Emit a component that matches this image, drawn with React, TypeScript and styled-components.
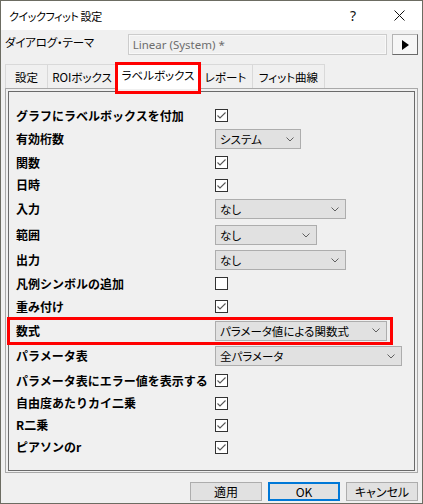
import React from "react";
import styled, { createGlobalStyle, css } from "styled-components";

const Global = createGlobalStyle`
  html, body { margin: 0; padding: 0; background: #ffffff; }
  body { font-family: "Noto Sans CJK JP", "Noto Sans", sans-serif; }
  *, *::before, *::after { box-sizing: border-box; }
`;

const UI = `"Noto Sans CJK JP", "Noto Sans", sans-serif`;

const Window = styled.div`
  width: 423px;
  height: 504px;
  border: 1px solid #6c6c62;
  background: #f0f0f0;
  display: flex;
  flex-direction: column;
  overflow: hidden;
`;

const TitleBar = styled.div`
  height: 29px;
  background: #ffffff;
  display: flex;
  align-items: center;
  padding-left: 8px;
  font-family: ${UI};
  font-feature-settings: "palt";
  font-size: 11px;
  letter-spacing: -0.4px;
  color: #000;
`;

const Title = styled.div`
  flex: 1;
`;

const TitleButton = styled.div<{ $w: number }>`
  width: ${(p) => p.$w}px;
  height: 29px;
  display: flex;
  align-items: center;
  justify-content: center;
  font-family: "Noto Sans", sans-serif;
  font-size: 14px;
  letter-spacing: 0;
  color: #111;
`;

const Body = styled.div`
  flex: 1;
  display: flex;
  flex-direction: column;
  padding: 0 4px;
`;

const ThemeRow = styled.div`
  display: flex;
  align-items: flex-start;
  margin-top: 4px;
  height: 21px;
`;

const ThemeLabel = styled.div`
  width: 123px;
  font-family: ${UI};
  font-feature-settings: "palt";
  font-size: 11.5px;
  letter-spacing: -0.2px;
  line-height: 15px;
  padding-top: 1px;
  color: #000;
`;

const ThemeInput = styled.div`
  width: 260px;
  height: 21px;
  border: 1px solid #cccccc;
  box-shadow: inset 0 0 0 1px #f8f8f8;
  background: #f0f0f0;
  font-family: "Noto Sans", sans-serif;
  font-size: 11.5px;
  color: #6d6d6d;
  display: flex;
  align-items: center;
  padding-left: 4px;
`;

const ArrowButton = styled.div`
  margin-left: 5px;
  width: 26px;
  height: 21px;
  background: #f6f6f6;
  border: 1px solid #b4b4b4;
  border-right-color: #6a6a6a;
  border-bottom-color: #6a6a6a;
  display: flex;
  align-items: center;
  justify-content: center;
`;

const TabStrip = styled.div`
  display: flex;
  align-items: flex-end;
  height: 26px;
  margin-top: 7px;
  position: relative;
  z-index: 2;
`;

const Tab = styled.div<{ $w: number; $active?: boolean }>`
  width: ${(p) => p.$w}px;
  flex: none;
  height: 24px;
  border: 1px solid #d9d9d9;
  border-bottom: none;
  background: #f0f0f0;
  margin-left: -1px;
  display: flex;
  align-items: center;
  justify-content: center;
  font-family: ${UI};
  font-feature-settings: "palt";
  font-size: 11.5px;
  white-space: nowrap;
  color: #000;
  &:first-child { margin-left: 0; }
  ${(p) =>
    p.$active &&
    css`
      position: relative;
      height: 27px;
      margin: 0 -2px -1px -2px;
      background: #ffffff;
      padding-bottom: 2px;
      z-index: 1;
      &::after {
        content: "";
        position: absolute;
        left: -1px;
        top: -1px;
        width: ${p.$w}px;
        height: 32px;
        border: 3px solid #ff0000;
      }
    `}
`;

const TabPanel = styled.div`
  height: 385px;
  border: 1px solid #a9a9a9;
  padding: 2px 2px 1px 2px;
  background: #f0f0f0;
`;

const Group = styled.div`
  height: 100%;
  border: 1px solid #6a6a6a;
  padding: 12px 0 0 7px;
  display: flex;
  flex-direction: column;
`;

const Row = styled.div<{ $h: number; $mark?: boolean }>`
  height: ${(p) => p.$h}px;
  flex: none;
  display: grid;
  grid-template-columns: 199px auto;
  align-items: center;
  position: relative;
  ${(p) =>
    p.$mark &&
    css`
      &::after {
        content: "";
        position: absolute;
        left: -9px;
        top: -1px;
        width: 386px;
        height: 28px;
        border: 3px solid #ff0000;
        pointer-events: none;
      }
    `}
`;

const Label = styled.div`
  font-family: ${UI};
  font-size: 12px;
  font-weight: 700;
  color: #000;
  white-space: nowrap;
  line-height: 14px;
`;

const CheckBox = styled.div`
  width: 13px;
  height: 13px;
  border: 1px solid #333333;
  background: #ffffff;
  display: flex;
  align-items: center;
  justify-content: center;
`;

const Select = styled.div<{ $w: number }>`
  width: ${(p) => p.$w}px;
  height: 20px;
  border: 1px solid #adadad;
  background: #e1e1e1;
  display: flex;
  align-items: center;
  justify-content: space-between;
  padding: 0 6px 0 4px;
  font-family: ${UI};
  font-feature-settings: "palt";
  font-size: 11.5px;
  white-space: nowrap;
  color: #000;
`;

const ButtonRow = styled.div`
  display: flex;
  justify-content: flex-end;
  gap: 6px;
  margin-top: 9px;
`;

const Button = styled.div<{ $default?: boolean }>`
  width: 72px;
  height: 19px;
  border: 1px solid #adadad;
  background: #e1e1e1;
  display: flex;
  align-items: center;
  justify-content: center;
  font-family: ${UI};
  font-feature-settings: "palt";
  font-size: 12px;
  color: #000;
  ${(p) =>
    p.$default &&
    css`
      border: 2px solid #0078d7;
    `}
`;

const Check = () => (
  <svg width="11" height="11" viewBox="0 0 11 11">
    <path d="M1.5 5.5 L4 8 L9.5 2.5" fill="none" stroke="#555" strokeWidth="1.1" />
  </svg>
);

const Chevron = () => (
  <svg width="8" height="5" viewBox="0 0 8 5">
    <path d="M0.5 0.5 L4 4 L7.5 0.5" fill="none" stroke="#606060" strokeWidth="1" />
  </svg>
);

type RowDef =
  | { label: string; kind: "check"; checked: boolean; h: number }
  | { label: string; kind: "select"; value: string; w: number; h: number; mark?: boolean };

const rows: RowDef[] = [
  { label: "グラフにラベルボックスを付加", kind: "check", checked: true, h: 23 },
  { label: "有効桁数", kind: "select", value: "システム", w: 86, h: 24 },
  { label: "関数", kind: "check", checked: true, h: 23 },
  { label: "日時", kind: "check", checked: true, h: 22 },
  { label: "入力", kind: "select", value: "なし", w: 131, h: 26 },
  { label: "範囲", kind: "select", value: "なし", w: 102, h: 26 },
  { label: "出力", kind: "select", value: "なし", w: 131, h: 24 },
  { label: "凡例シンボルの追加", kind: "check", checked: false, h: 23 },
  { label: "重み付け", kind: "check", checked: true, h: 23 },
  { label: "数式", kind: "select", value: "パラメータ値による関数式", w: 172, h: 25, mark: true },
  { label: "パラメータ表", kind: "select", value: "全パラメータ", w: 187, h: 26 },
  { label: "パラメータ表にエラー値を表示する", kind: "check", checked: true, h: 23 },
  { label: "自由度あたりカイ二乗", kind: "check", checked: true, h: 22 },
  { label: "R二乗", kind: "check", checked: true, h: 22 },
  { label: "ピアソンのr", kind: "check", checked: true, h: 22 },
];

const tabs = [
  { label: "設定", w: 43 },
  { label: "ROIボックス", w: 70 },
  { label: "ラベルボックス", w: 86, active: true },
  { label: "レポート", w: 55 },
  { label: "フィット曲線", w: 73 },
];

export default function App() {
  return (
    <>
      <Global />
      <Window>
        <TitleBar>
          <Title>クイックフィット 設定</Title>
          <TitleButton $w={46}>?</TitleButton>
          <TitleButton $w={46}>
            <svg width="11" height="11" viewBox="0 0 11 11">
              <path d="M0.5 0.5 L10.5 10.5 M10.5 0.5 L0.5 10.5" stroke="#111" strokeWidth="1" />
            </svg>
          </TitleButton>
        </TitleBar>
        <Body>
          <ThemeRow>
            <ThemeLabel>ダイアログ・テーマ</ThemeLabel>
            <ThemeInput>Linear (System) *</ThemeInput>
            <ArrowButton>
              <svg width="8" height="10" viewBox="0 0 8 10">
                <path d="M1 0 L8 5 L1 10 Z" fill="#000" />
              </svg>
            </ArrowButton>
          </ThemeRow>
          <TabStrip>
            {tabs.map((t) => (
              <Tab key={t.label} $w={t.w} $active={t.active}>
                {t.label}
              </Tab>
            ))}
          </TabStrip>
          <TabPanel>
            <Group>
              {rows.map((r) => (
                <Row key={r.label} $h={r.h} $mark={r.kind === "select" && r.mark}>
                  <Label>{r.label}</Label>
                  {r.kind === "check" ? (
                    <CheckBox>{r.checked && <Check />}</CheckBox>
                  ) : (
                    <Select $w={r.w}>
                      <span>{r.value}</span>
                      <Chevron />
                    </Select>
                  )}
                </Row>
              ))}
            </Group>
          </TabPanel>
          <ButtonRow>
            <Button>適用</Button>
            <Button $default>OK</Button>
            <Button>キャンセル</Button>
          </ButtonRow>
        </Body>
      </Window>
    </>
  );
}
